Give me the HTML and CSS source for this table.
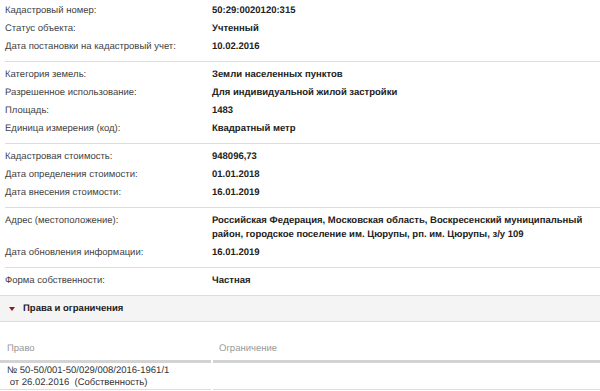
FILE: index.html
```html
<!DOCTYPE html>
<html lang="ru">
<head>
<meta charset="utf-8">
<title>Объект недвижимости</title>
<link rel="stylesheet" href="styles.css">
</head>
<body>
<div class="info">
  <div class="group first">
    <div class="row"><div class="label">Кадастровый номер:</div><div class="value">50:29:0020120:315</div></div>
    <div class="row"><div class="label">Статус объекта:</div><div class="value">Учтенный</div></div>
    <div class="row"><div class="label">Дата постановки на кадастровый учет:</div><div class="value">10.02.2016</div></div>
  </div>
  <div class="group">
    <div class="row"><div class="label">Категория земель:</div><div class="value">Земли населенных пунктов</div></div>
    <div class="row"><div class="label">Разрешенное использование:</div><div class="value">Для индивидуальной жилой застройки</div></div>
    <div class="row"><div class="label">Площадь:</div><div class="value">1483</div></div>
    <div class="row"><div class="label">Единица измерения (код):</div><div class="value">Квадратный метр</div></div>
  </div>
  <div class="group">
    <div class="row"><div class="label">Кадастровая стоимость:</div><div class="value">948096,73</div></div>
    <div class="row"><div class="label">Дата определения стоимости:</div><div class="value">01.01.2018</div></div>
    <div class="row"><div class="label">Дата внесения стоимости:</div><div class="value">16.01.2019</div></div>
  </div>
  <div class="group">
    <div class="row"><div class="label">Адрес (местоположение):</div><div class="value">Российская Федерация, Московская область, Воскресенский муниципальный район, городское поселение им. Цюрупы, рп. им. Цюрупы, з/у 109</div></div>
    <div class="row"><div class="label">Дата обновления информации:</div><div class="value">16.01.2019</div></div>
  </div>
  <div class="group last">
    <div class="row"><div class="label">Форма собственности:</div><div class="value">Частная</div></div>
  </div>
</div>

<div class="section-bar">
  <span class="caret"></span>
  <span class="section-title">Права и ограничения</span>
</div>

<table class="rights">
  <thead>
    <tr><th class="col-right">Право</th><th class="col-limit">Ограничение</th></tr>
  </thead>
  <tbody>
    <tr>
      <td class="col-right">№ 50-50/001-50/029/008/2016-1961/1<br>&nbsp;от 26.02.2016&nbsp; (Собственность)</td>
      <td class="col-limit"></td>
    </tr>
  </tbody>
</table>
</body>
</html>
```

FILE: styles.css
```css
html, body {
  margin: 0;
  padding: 0;
  background: #ffffff;
}

body {
  font-family: "Liberation Sans", Arial, sans-serif;
  font-size: 9.5px;
  text-rendering: geometricPrecision;
  color: #444444;
}

.info {
  margin-left: 5px;
}

.group {
  padding: 4px 0 5px;
  border-bottom: 1px solid #dddddd;
}

.group.first {
  padding-top: 2px;
}

.group.last {
  border-bottom: none;
}

.row {
  display: grid;
  grid-template-columns: 207px 1fr;
  line-height: 14px;
  padding: 2px 0;
}

.label {
  color: #3f3f3f;
}

.value {
  color: #222222;
  font-weight: bold;
  padding-right: 2px;
}

.section-bar {
  display: flex;
  align-items: center;
  gap: 8px;
  height: 25px;
  padding-left: 9px;
  background: #f4f4f4;
  border-top: 1px solid #dddddd;
  border-bottom: 1px solid #dddddd;
}

.caret {
  width: 0;
  height: 0;
  border-left: 3px solid transparent;
  border-right: 3px solid transparent;
  border-top: 4px solid #8b1c24;
}

.section-title {
  font-weight: bold;
  color: #222222;
}

.rights {
  margin-top: 20px;
  border-collapse: separate;
  border-spacing: 2px 0;
  margin-left: -2px;
  width: calc(100% + 4px);
  font-size: 9.5px;
}

.rights th {
  text-align: left;
  font-weight: normal;
  color: #999999;
  line-height: 14px;
  padding: 0 0 4px;
  border-bottom: 3px solid #d3d3d3;
}

.rights td {
  color: #333333;
  line-height: 12px;
  padding: 2px 0 0;
  border-bottom: 1px solid #dddddd;
  vertical-align: top;
}

.rights .col-right {
  width: 204px;
  padding-left: 7px;
}

.rights .col-limit {
  padding-left: 6px;
}
```
